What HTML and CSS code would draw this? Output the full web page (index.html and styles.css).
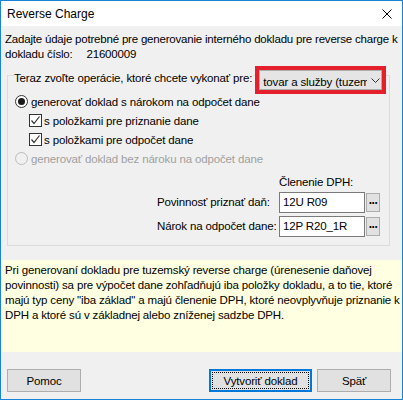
FILE: index.html
```html
<!DOCTYPE html>
<html lang="sk">
<head>
  <meta charset="UTF-8" />
  <title>Reverse Charge</title>
  <link rel="stylesheet" href="styles.css">
</head>
<body>
  <div class="window">
    <div class="titlebar">
      <span class="title">Reverse Charge</span>
      <svg class="close" width="10" height="10" viewBox="0 0 10 10">
        <path d="M0.5 0.5L9.5 9.5M9.5 0.5L0.5 9.5" stroke="#000" stroke-width="1" fill="none"/>
      </svg>
    </div>

    <div class="intro">
      Zadajte údaje potrebné pre generovanie interného dokladu pre reverse charge k<br>
      dokladu číslo:<span class="doc-no">21600009</span>
    </div>

    <div class="group">
      <div class="group-head">
        <span class="group-caption">Teraz zvoľte operácie, ktoré chcete vykonať pre:</span>
        <div class="highlight">
          <div class="combo">
            <span class="combo-text">tovar a služby (tuzemsko)</span>
            <svg class="chevron" width="9" height="5" viewBox="0 0 9 5">
              <path d="M0.5 0.5L4.5 4.5L8.5 0.5" stroke="#333" stroke-width="1" fill="none"/>
            </svg>
          </div>
        </div>
      </div>

      <div class="opt">
        <span class="radio checked"></span>generovať doklad s nárokom na odpočet dane
      </div>
      <div class="opt sub">
        <span class="check"><svg width="11" height="11" viewBox="0 0 11 11"><path d="M1.5 5.5L4 8.5L9.5 1.5" stroke="#333" stroke-width="1.2" fill="none"/></svg></span>s položkami pre priznanie dane
      </div>
      <div class="opt sub">
        <span class="check"><svg width="11" height="11" viewBox="0 0 11 11"><path d="M1.5 5.5L4 8.5L9.5 1.5" stroke="#333" stroke-width="1.2" fill="none"/></svg></span>s položkami pre odpočet dane
      </div>
      <div class="opt disabled">
        <span class="radio"></span>generovať doklad bez nároku na odpočet dane
      </div>

      <div class="dph">
        <div class="dph-title">Členenie DPH:</div>
        <div class="dph-row">
          <span class="dph-label">Povinnosť priznať daň:</span>
          <span class="field">12U R09</span>
          <span class="dots">...</span>
        </div>
        <div class="dph-row">
          <span class="dph-label">Nárok na odpočet dane:</span>
          <span class="field">12P R20_1R</span>
          <span class="dots">...</span>
        </div>
      </div>
    </div>

    <div class="info">
      Pri generovaní dokladu pre tuzemský reverse charge (úrenesenie daňovej<br>
      povinnosti) sa pre výpočet dane zohľadňujú iba položky dokladu, a to tie, ktoré<br>
      majú typ ceny "iba základ" a majú členenie DPH, ktoré neovplyvňuje priznanie k<br>
      DPH a ktoré sú v základnej alebo zníženej sadzbe DPH.
    </div>

    <div class="footer">
      <button class="btn">Pomoc</button>
      <button class="btn default">Vytvoriť doklad</button>
      <button class="btn">Späť</button>
    </div>
  </div>
</body>
</html>
```

FILE: styles.css
```css
:root {
  --frame: #1883d7;
  --face: #f0f0f0;
  --btn-face: #e1e1e1;
  --btn-border: #adadad;
  --group-line: #dcdcdc;
  --note-bg: #ffffe1;
  --mark: #e3202b;
}
* { box-sizing: border-box; }
body {
  margin: 0; font-family: "Liberation Sans", Arial, sans-serif; font-size: 11.5px;
  letter-spacing: -0.15px; color: #000;
}
.window {
  width: 403px; height: 400px; border: 1px solid var(--frame); background: var(--face);
  display: flex; flex-direction: column; overflow: hidden;
}
.titlebar {
  height: 25px; background: #fff; flex-shrink: 0;
  display: flex; align-items: center; justify-content: space-between; padding: 0 10px 0 6px;
}
.title { font-size: 12px; letter-spacing: 0; }
.close { display: block; margin-top: 1px; }

.intro { padding: 6px 4px 0; line-height: 15px; white-space: nowrap; height: 36px; letter-spacing: -0.2px; }
.doc-no { margin-left: 14px; }

.group {
  margin: 13px 12px 0 6px; border: 1px solid var(--group-line); padding: 0 0 9px 7px;
}
.group-head { display: flex; align-items: center; margin: -10px 0 -2px -1px; height: 28px; }
.group-caption { background: var(--face); padding: 0 1px 0 0; margin: 0 2px 4px 0; white-space: nowrap; }
.highlight { border: 4px solid var(--mark); background: var(--face); flex-shrink: 0; }
.combo {
  width: 123px; height: 20px; background: #e5e5e5; border: 1px solid var(--btn-border);
  display: flex; align-items: center; padding: 0 0 0 3px; overflow: hidden;
}
.combo-text { white-space: nowrap; overflow: hidden; width: 104px; margin-top: 3px; }
.chevron { display: block; margin-left: 4px; margin-top: 1px; }

.opt { height: 19px; display: flex; align-items: center; white-space: nowrap; }
.opt.sub { padding-left: 14px; }
.opt.disabled { color: #a0a0a0; }
.radio {
  width: 13px; height: 13px; border: 1px solid #333; border-radius: 50%; background: #fff;
  margin-right: 3px; display: flex; align-items: center; justify-content: center;
}
.radio.checked::after { content: ""; width: 7px; height: 7px; border-radius: 50%; background: #1a1a1a; }
.disabled .radio { border-color: #bcbcbc; background: var(--face); }
.check {
  width: 13px; height: 13px; border: 1px solid #333; background: #fff; margin-right: 2px;
  display: flex; align-items: center; justify-content: center;
}
.check svg { display: block; }

.dph { margin: 7px 0 0 142px; }
.dph-title { height: 15px; line-height: 15px; padding-left: 122px; margin-bottom: 2px; }
.dph-row { display: flex; align-items: center; height: 20px; }
.dph-row + .dph-row { margin-top: 4px; }
.dph-label { width: 122px; white-space: nowrap; }
.field {
  width: 86px; height: 21px; background: #fff; border: 1px solid #7a7a7a; padding: 0 3px;
  line-height: 19px;
}
.dots {
  width: 14px; height: 19px; margin-left: 1px; background: var(--btn-face); border: 1px solid var(--btn-border);
  font-weight: bold; font-size: 12px; line-height: 12px; text-align: center; letter-spacing: -0.5px;
}

.info {
  margin-top: 14px; height: 92px; background: var(--note-bg); padding: 3px 4px 0;
  line-height: 15px; white-space: nowrap;
}

.footer { display: flex; padding: 17px 11px 7px 6px; }
.btn {
  height: 23px; width: 74px; background: var(--btn-face); border: 1px solid var(--btn-border);
  font: inherit; letter-spacing: inherit; color: #000; padding: 0;
}
.btn.default {
  width: 103px; margin-left: auto; margin-right: 5px; border-color: #0078d7;
  box-shadow: inset 0 0 0 1px #0078d7; outline: 1px dotted #000; outline-offset: -4px;
}
```
